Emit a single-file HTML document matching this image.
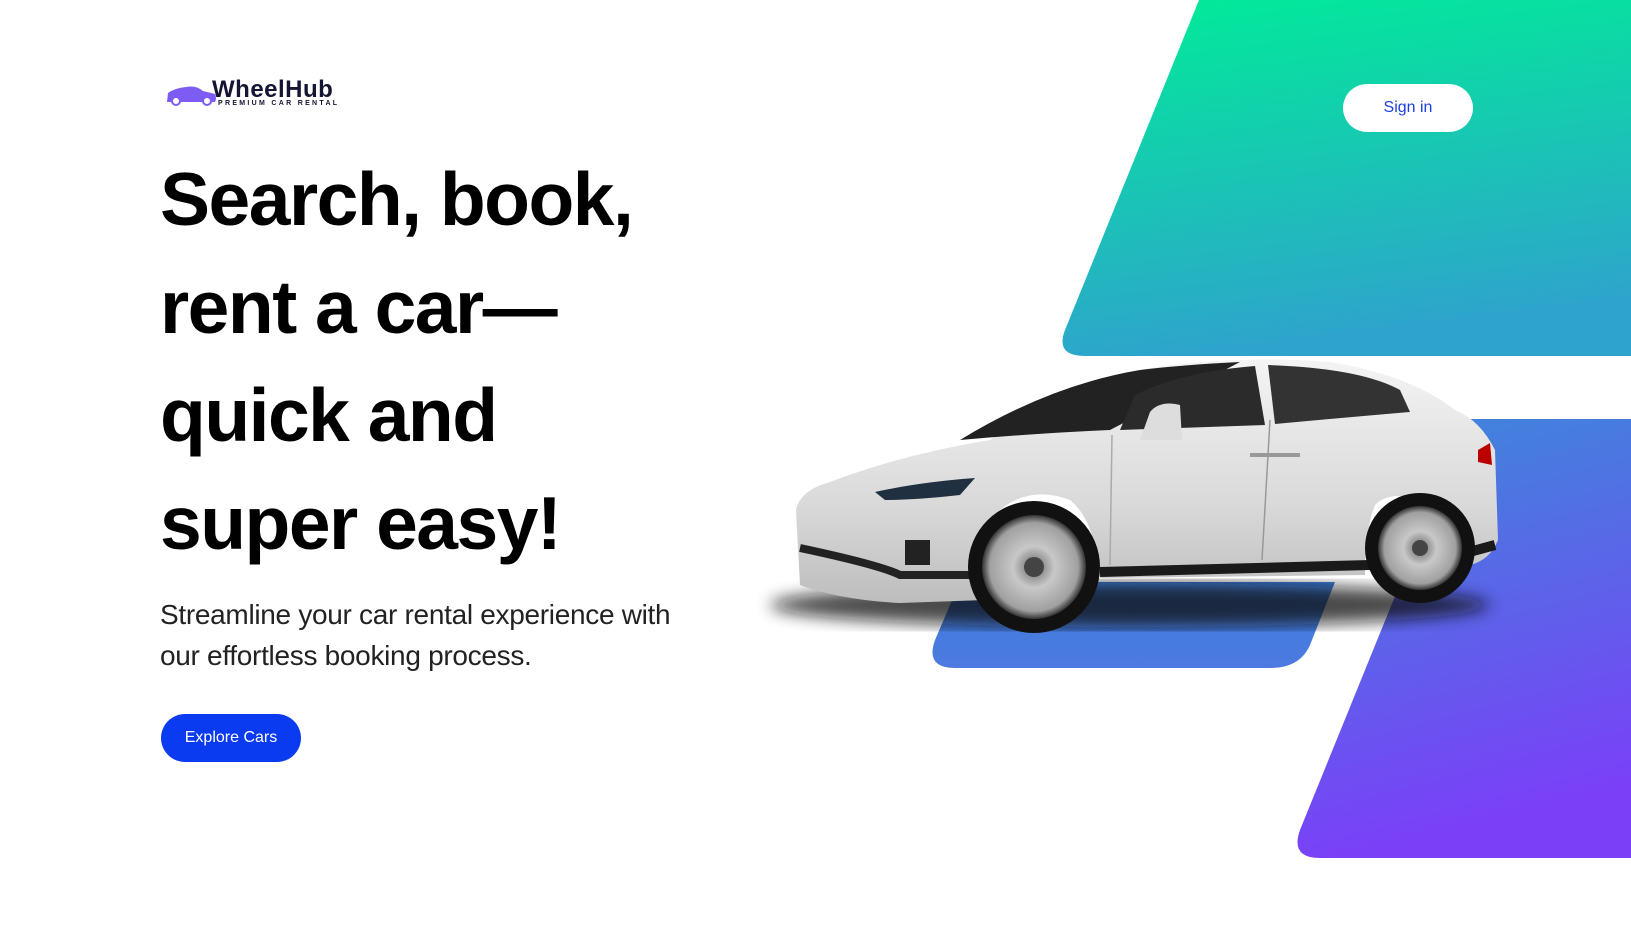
<!DOCTYPE html>
<html><head><meta charset="utf-8"><style>
html,body{margin:0;padding:0;width:1631px;height:925px;overflow:hidden;background:#fff;font-family:"Liberation Sans",sans-serif}
.abs{position:absolute}
h1{position:absolute;left:160px;top:145px;margin:0;font-size:75px;line-height:108px;font-weight:bold;color:#000;letter-spacing:-1.5px}
.sub{left:160px;top:594px;font-size:28px;line-height:41px;color:#222;letter-spacing:-0.3px}
.btn{left:161px;top:714px;width:140px;height:48px;border-radius:24px;background:#0b3bf0;color:#fff;font-size:16px;line-height:48px;text-align:center}
.sign{left:1343px;top:84px;width:130px;height:48px;border-radius:24px;background:#fff;color:#1a3fe0;font-size:16px;line-height:48px;text-align:center}
</style></head><body>
<svg class="abs" style="left:0;top:0" width="1631" height="925" viewBox="0 0 1631 925">
<defs>
<linearGradient id="g1" x1="0" y1="0" x2="0.2" y2="1"><stop offset="0" stop-color="#00ec98"/><stop offset="1" stop-color="#2ea4cc"/></linearGradient>
<linearGradient id="g2" x1="0" y1="0" x2="0.2" y2="1"><stop offset="0" stop-color="#3b8ad9"/><stop offset="1" stop-color="#7b3ff8"/></linearGradient>
<linearGradient id="g3" x1="0" y1="0" x2="0" y2="1"><stop offset="0" stop-color="#3f7edc"/><stop offset="1" stop-color="#4c7ae0"/></linearGradient>
<linearGradient id="body" x1="0" y1="0" x2="0" y2="1"><stop offset="0" stop-color="#f4f4f4"/><stop offset="0.6" stop-color="#d9d9d9"/><stop offset="1" stop-color="#bdbdbd"/></linearGradient>
<radialGradient id="rim"><stop offset="0" stop-color="#666"/><stop offset="0.4" stop-color="#c8c8c8"/><stop offset="0.85" stop-color="#a0a0a0"/><stop offset="1" stop-color="#333"/></radialGradient>
<filter id="bl"><feGaussianBlur stdDeviation="8"/></filter>
</defs>
<path d="M1199 0 H1631 V356 H1085 Q1055 356 1065 330 Z" fill="url(#g1)"/>
<path d="M1467 419 H1631 V858 H1320 Q1290 858 1300 830 Z" fill="url(#g2)"/>
<path d="M960 582 H1335 L1310 645 Q1300 668 1270 668 H955 Q925 668 935 640 Z" fill="url(#g3)"/>
<ellipse cx="1130" cy="605" rx="360" ry="22" fill="#111" opacity=".75" filter="url(#bl)"/>
<path d="M800 585 L796 510 Q800 490 830 482 Q900 455 990 440 Q1080 380 1150 368 Q1240 355 1330 362 Q1410 375 1455 410 Q1480 420 1495 450 L1498 540 Q1490 560 1470 565 L1440 568 Q1435 510 1420 500 Q1390 490 1375 505 Q1365 530 1365 575 L1100 578 Q1095 520 1070 500 Q1030 485 1000 510 Q985 530 985 600 L900 603 Q840 600 800 585 Z" fill="url(#body)"/>
<path d="M960 440 Q1050 385 1140 370 Q1180 365 1240 362 L1110 430 Q1040 433 960 440 Z" fill="#222"/>
<path d="M1120 430 L1135 395 Q1180 372 1255 366 L1265 425 Z" fill="#2b2b2b"/>
<path d="M1275 424 L1268 365 Q1360 368 1400 390 L1410 412 Q1340 418 1275 424 Z" fill="#333"/>
<path d="M1150 412 Q1160 400 1180 405 L1182 440 L1140 440 Z" fill="#ddd"/>
<path d="M1270 420 L1262 560" stroke="#999" stroke-width="1.5"/>
<path d="M1112 435 L1110 565" stroke="#aaa" stroke-width="1.5"/>
<path d="M1250 455 H1300" stroke="#999" stroke-width="4"/>
<path d="M875 492 Q920 482 975 478 L960 495 Q915 500 885 500 Z" fill="#203040"/>
<path d="M1478 450 L1490 443 L1492 465 L1478 462 Z" fill="#b00"/>
<path d="M800 548 Q880 565 900 575 L1000 575" stroke="#222" stroke-width="8" fill="none"/>
<path d="M1100 572 L1370 565" stroke="#1a1a1a" stroke-width="10"/>
<path d="M1440 560 L1495 545" stroke="#1a1a1a" stroke-width="10"/>
<rect x="905" y="540" width="25" height="25" fill="#222"/>
<circle cx="1034" cy="567" r="66" fill="#111"/>
<circle cx="1034" cy="567" r="52" fill="url(#rim)"/>
<circle cx="1034" cy="567" r="10" fill="#444"/>
<circle cx="1420" cy="548" r="55" fill="#111"/>
<circle cx="1420" cy="548" r="42" fill="url(#rim)"/>
<circle cx="1420" cy="548" r="8" fill="#444"/>
<path d="M167 102 L168 93 Q175 88 186 87 Q196 85 203 91 L215 94 Q217 98 215 102 Z" fill="#7d5cf4"/>
<circle cx="176" cy="101" r="4" fill="#fff" stroke="#7d5cf4" stroke-width="2"/>
<circle cx="207" cy="101" r="4" fill="#fff" stroke="#7d5cf4" stroke-width="2"/>
</svg>
<div class="abs" style="left:212px;top:76px;font-size:24px;font-weight:bold;color:#141433;letter-spacing:0.5px">WheelHub</div>
<div class="abs" style="left:218px;top:100px;font-size:7px;font-weight:bold;color:#141433;letter-spacing:2.3px">PREMIUM CAR RENTAL</div>
<div class="abs sign">Sign in</div>
<h1>Search, book,<br>rent a car—<br>quick and<br>super easy!</h1>
<div class="abs sub">Streamline your car rental experience with<br>our effortless booking process.</div>
<div class="abs btn">Explore Cars</div>
</body></html>
